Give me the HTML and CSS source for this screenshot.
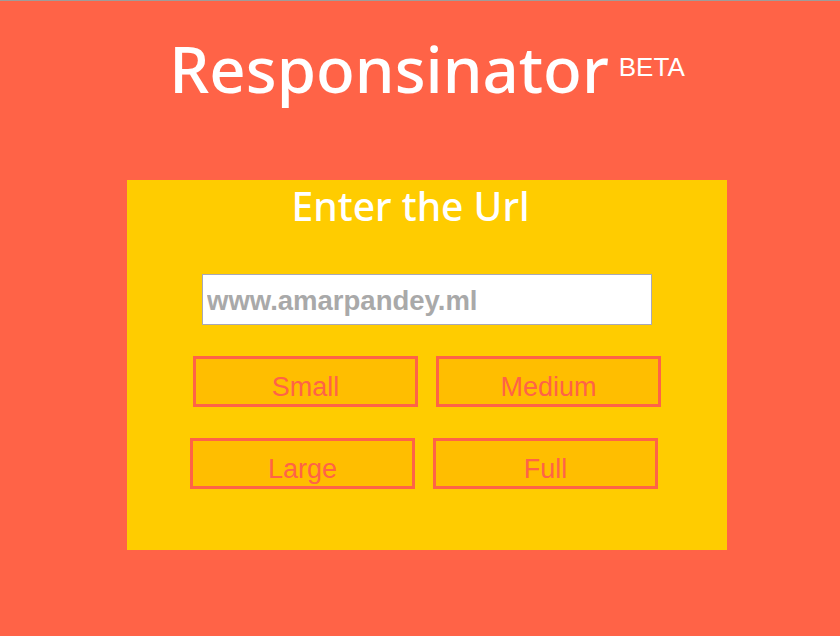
FILE: index.html
```html
<!DOCTYPE html>
<html lang="en">
<head>
<meta charset="utf-8">
<title>Responsinator</title>
<link rel="stylesheet" href="styles.css">
</head>
<body>
  <div class="page">
    <header class="header">
      <h1 class="title">Responsinator<span class="beta">BETA</span></h1>
    </header>
    <main class="card">
      <h2 class="card-title">Enter the Url</h2>
      <input class="url" type="text" placeholder="www.amarpandey.ml">
      <div class="row">
        <button class="size-btn">Small</button>
        <button class="size-btn">Medium</button>
      </div>
      <div class="row row-second">
        <button class="size-btn">Large</button>
        <button class="size-btn">Full</button>
      </div>
    </main>
  </div>
</body>
</html>
```
FILE: styles.css
```css
html, body {
  margin: 0;
  padding: 0;
  height: 100%;
}

body {
  background: #ff6347;
  border-top: 1px solid #a09c9a;
  box-sizing: border-box;
  overflow: hidden;
}

.page {
  padding-left: 14px;
  display: flex;
  flex-direction: column;
  align-items: center;
}

.header {
  padding-top: 35px;
  display: flex;
  justify-content: center;
}

.title {
  margin: 0;
  font-family: "Comic Sans MS", "Noto Sans", sans-serif;
  font-weight: 500;
  font-size: 63.5px;
  line-height: 65px;
  color: #ffffff;
  white-space: nowrap;
}

.beta {
  font-family: "Liberation Sans", Arial, sans-serif;
  font-weight: normal;
  font-size: 26px;
  margin-left: 10px;
  vertical-align: 17px;
  line-height: 1;
}

.card {
  margin-top: 79px;
  width: 600px;
  height: 370px;
  box-sizing: border-box;
  background: #ffcc00;
  padding-top: 7px;
  display: flex;
  flex-direction: column;
  align-items: center;
}

.card-title {
  margin: 0;
  padding-right: 33px;
  font-family: "Comic Sans MS", "Noto Sans", sans-serif;
  font-weight: 500;
  font-size: 39px;
  line-height: 38px;
  color: #ffffff;
}

.url {
  margin-top: 49px;
  width: 450px;
  height: 51px;
  box-sizing: border-box;
  border: 1px solid #a8a8b8;
  padding: 3px 0 0 4px;
  background: #ffffff;
  font-family: "Liberation Sans", Arial, sans-serif;
  font-weight: bold;
  font-size: 27.5px;
  color: #a9a9a9;
  outline: none;
}

.url::placeholder {
  color: #a9a9a9;
  opacity: 1;
}

.row {
  margin-top: 31px;
  display: flex;
  gap: 18px;
}

.row-second {
  padding-right: 6px;
}

.size-btn {
  width: 225px;
  height: 51px;
  box-sizing: border-box;
  border: 3px solid #ff6347;
  background: #ffbe00;
  color: #ff6347;
  font-family: "Liberation Sans", Arial, sans-serif;
  font-size: 27px;
  padding: 12px 0 0;
  margin: 0;
  cursor: pointer;
}
```
